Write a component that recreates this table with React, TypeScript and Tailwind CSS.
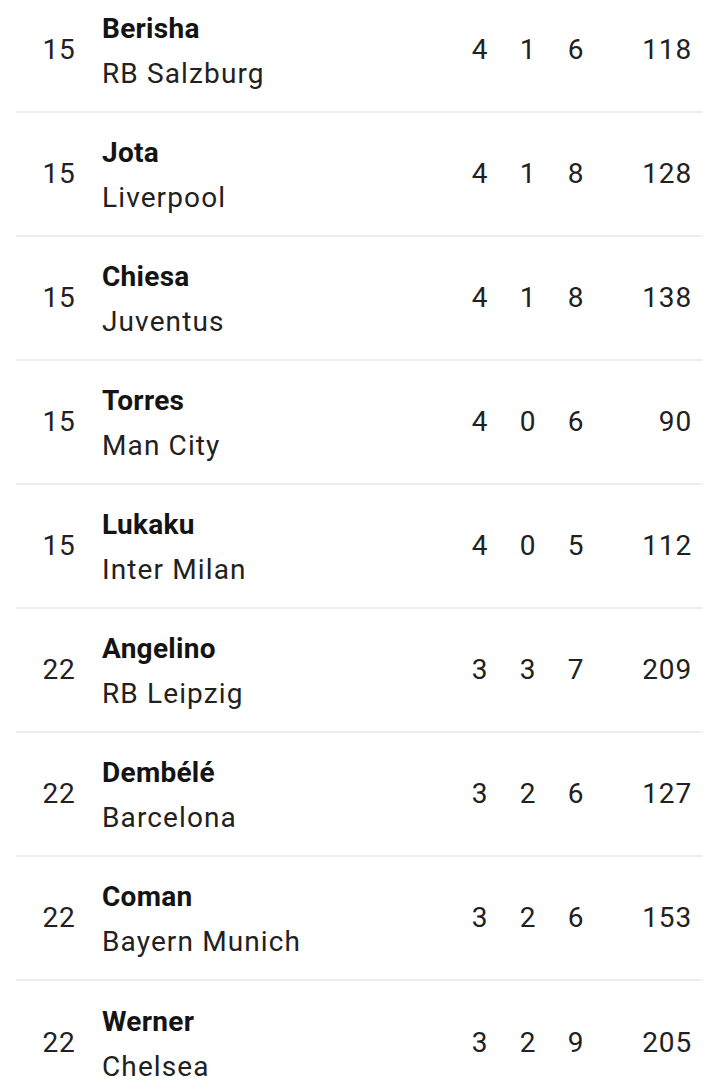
import React from "react";

const players = [
  { rank: 15, name: "Berisha", team: "RB Salzburg", g: 4, a: 1, s: 6, min: 118 },
  { rank: 15, name: "Jota", team: "Liverpool", g: 4, a: 1, s: 8, min: 128 },
  { rank: 15, name: "Chiesa", team: "Juventus", g: 4, a: 1, s: 8, min: 138 },
  { rank: 15, name: "Torres", team: "Man City", g: 4, a: 0, s: 6, min: 90 },
  { rank: 15, name: "Lukaku", team: "Inter Milan", g: 4, a: 0, s: 5, min: 112 },
  { rank: 22, name: "Angelino", team: "RB Leipzig", g: 3, a: 3, s: 7, min: 209 },
  { rank: 22, name: "Dembélé", team: "Barcelona", g: 3, a: 2, s: 6, min: 127 },
  { rank: 22, name: "Coman", team: "Bayern Munich", g: 3, a: 2, s: 6, min: 153 },
  { rank: 22, name: "Werner", team: "Chelsea", g: 3, a: 2, s: 9, min: 205 },
];

export default function App() {
  return (
    <div className="w-[710px] h-[1092px] overflow-hidden bg-white font-['Roboto',sans-serif] text-[28px] leading-[46px] text-[#212121] tracking-[0.03em]">
      {/* Scorers list, scrolled mid-way */}
      <div className="ml-4 mr-[7px] -mt-[11px]">
        {players.map((p, i) => (
          <div key={p.name} className={`flex items-center h-[124px] ${i < players.length - 1 ? "border-b-2 border-[#eeeeee]" : ""}`}>
            <div className="w-[86px] text-center">{p.rank}</div>
            <div className="flex-1 flex flex-col pt-[4px]">
              <span className="font-bold text-[#141414] tracking-[0.01em] leading-[44px]">{p.name}</span>
              <span className="tracking-[0.04em]">{p.team}</span>
            </div>
            <div className="w-[48px] text-center">{p.g}</div>
            <div className="w-[48px] text-center">{p.a}</div>
            <div className="w-[48px] text-center">{p.s}</div>
            <div className="w-[103px] pr-[11px] text-right">{p.min}</div>
          </div>
        ))}
      </div>
    </div>
  );
}
